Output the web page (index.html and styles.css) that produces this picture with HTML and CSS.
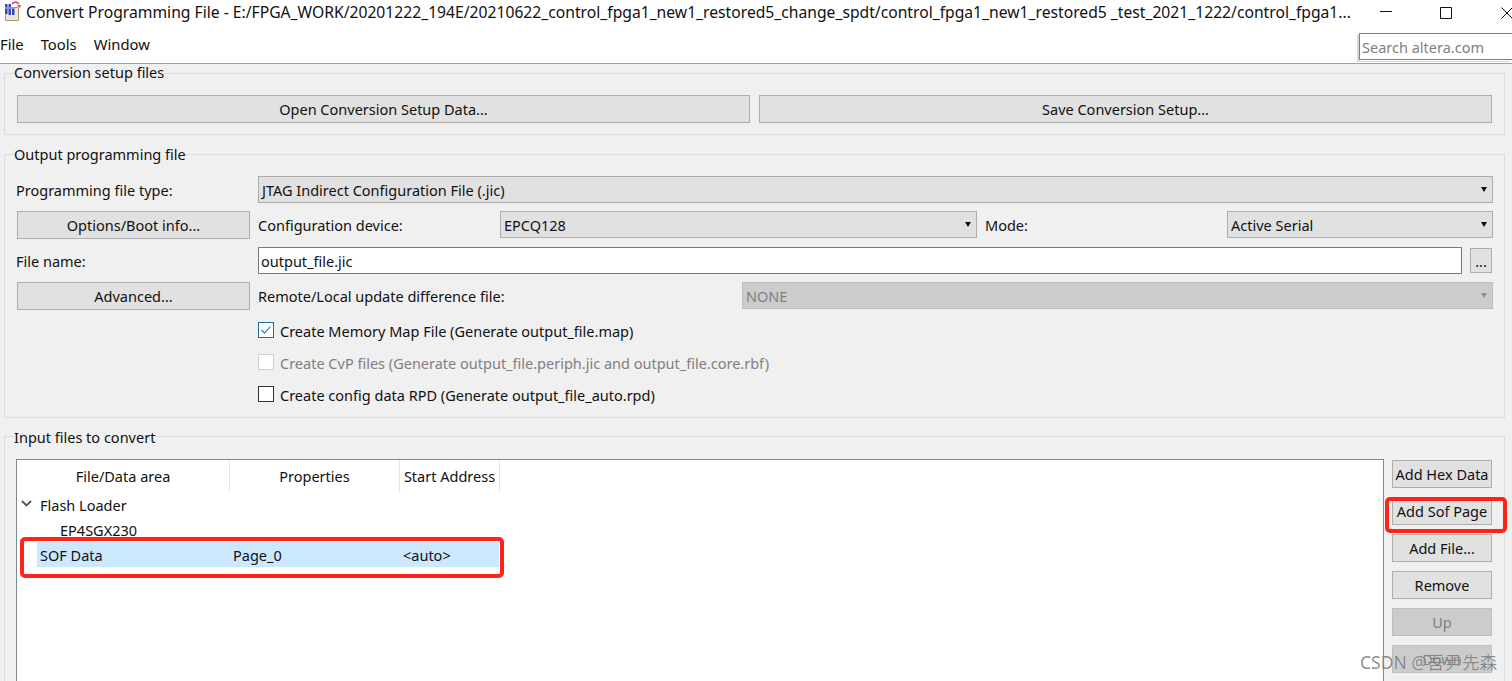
FILE: index.html
```html
<!DOCTYPE html>
<html lang="en">
<head>
<meta charset="utf-8">
<title>Convert Programming File</title>
<link rel="stylesheet" href="styles.css">
</head>
<body>
<div class="window">
  <header class="titlebar">
    <svg class="appicon" width="20" height="20" viewBox="0 0 20 20">
      <path d="M3.500 6.500h13v13h-13z" fill="#efe6d2" stroke="#a8987c"/>
      <path d="M3 3h2.500v10H3zM6.500 3H9v11H6.500zM10 6h2.500v8H10z" fill="#2f48b4"/>
      <path d="M3 6h10v2H3z" fill="#8a93c8"/>
      <path d="M10 3c2-2.500 5-2.500 7 0" fill="none" stroke="#e8486f" stroke-width="1.600"/>
      <path d="M15 4h4.500l-2 3z" fill="#e8486f"/>
    </svg>
    <div class="title">Convert Programming File - E:/FPGA_WORK/20201222_194E/20210622_control_fpga1_new1_restored5_change_spdt/control_fpga1_new1_restored5 _test_2021_1222/control_fpga1...</div>
    <div class="winctl">
      <svg class="minimize" width="12" height="12" viewBox="0 0 12 12"><path d="M0 4.500h12" stroke="#111" fill="none"/></svg>
      <svg class="maximize" width="12" height="12" viewBox="0 0 12 12"><path d="M.5.5h11v11H.5z" stroke="#111" fill="none"/></svg>
      <svg class="close" width="12" height="12" viewBox="0 0 12 12"><path d="M.5.5l11 11M11.500.5l-11 11" stroke="#111" fill="none"/></svg>
    </div>
  </header>
  <nav class="menubar">
    <span class="menu first">File</span>
    <span class="menu">Tools</span>
    <span class="menu">Window</span>
    <input class="search" placeholder="Search altera.com">
  </nav>
  <main class="content">
    <fieldset class="group setup">
      <legend>Conversion setup files</legend>
      <div class="setup-row">
        <button class="btn grow">Open Conversion Setup Data...</button>
        <button class="btn grow">Save Conversion Setup...</button>
      </div>
    </fieldset>

    <fieldset class="group output">
      <legend>Output programming file</legend>
      <div class="row r1">
        <label class="side-label">Programming file type:</label>
        <div class="combo fill">JTAG Indirect Configuration File (.jic)<i class="arrow"></i></div>
      </div>
      <div class="row r2">
        <button class="btn side">Options/Boot info...</button>
        <label class="cfg-label">Configuration device:</label>
        <div class="combo cfg">EPCQ128<i class="arrow"></i></div>
        <label class="mode-label">Mode:</label>
        <div class="combo mode">Active Serial<i class="arrow"></i></div>
      </div>
      <div class="row r3">
        <label class="side-label">File name:</label>
        <div class="textbox">output_file.jic</div>
        <button class="btn browse">...</button>
      </div>
      <div class="row r4">
        <button class="btn side">Advanced...</button>
        <label class="remote-label">Remote/Local update difference file:</label>
        <div class="combo disabled none">NONE<i class="arrow"></i></div>
      </div>
      <div class="checks">
        <div class="check">
          <span class="box on"><svg width="14" height="14" viewBox="0 0 14 14"><path d="M2.500 7l3 3.200 6-6.700" fill="none" stroke="#2a6fb0" stroke-width="1.100"/></svg></span>
          Create Memory Map File (Generate output_file.map)
        </div>
        <div class="check dim"><span class="box"></span>Create CvP files (Generate output_file.periph.jic and output_file.core.rbf)</div>
        <div class="check"><span class="box"></span>Create config data RPD (Generate output_file_auto.rpd)</div>
      </div>
    </fieldset>

    <fieldset class="group input">
      <legend>Input files to convert</legend>
      <div class="input-body">
        <div class="tree">
          <div class="thead">
            <span class="th c1">File/Data area</span>
            <span class="th c2">Properties</span>
            <span class="th c3">Start Address</span>
          </div>
          <div class="trow loader">
            <svg class="chev" width="11" height="8" viewBox="0 0 11 8"><path d="M1 1l4.500 4.500L10 1" fill="none" stroke="#555" stroke-width="1.800"/></svg>
            Flash Loader
          </div>
          <div class="trow device">EP4SGX230</div>
          <div class="trow selected">
            <span class="d1">SOF Data</span><span class="d2">Page_0</span><span class="d3">&lt;auto&gt;</span>
          </div>
        </div>
        <div class="actions">
          <button class="btn act">Add Hex Data</button>
          <button class="btn act">Add Sof Page</button>
          <button class="btn act">Add File...</button>
          <button class="btn act">Remove</button>
          <button class="btn act off">Up</button>
          <button class="btn act off">Down</button>
        </div>
      </div>
    </fieldset>
  </main>
  <div class="mark mark-row"></div>
  <div class="mark mark-btn"></div>
  <div class="watermark">CSDN @吾尹先森</div>
</div>
</body>
</html>
```

FILE: styles.css
```css
* { box-sizing: border-box; }
html, body { margin: 0; padding: 0; }
body {
  width: 1512px; height: 681px; overflow: hidden;
  font-family: "Noto Sans", "Noto Sans CJK SC", sans-serif;
  font-size: 14.5px; color: #111; background: #f0f0f0;
}
.window { position: relative; width: 1512px; height: 681px; overflow: hidden; }

.titlebar { height: 31px; background: #fff; display: flex; align-items: flex-start; }
.appicon { margin: 1px 0 0 2px; flex: none; }
.title { margin-left: 4px; padding-top: 2px; width: 1330px; white-space: nowrap; font-size: 15.68px; line-height: 20px; color: #111; flex: none; }
.winctl { display: flex; flex: none; }
.minimize { margin: 7px 0 0 24px; }
.maximize { margin: 7px 0 0 48px; }
.close { margin: 7px 0 0 49px; }

.menubar { height: 33px; background: #fff; border-bottom: 1px solid #a0a0a8; display: flex; align-items: flex-start; }
.menu { font-size: 14.8px; line-height: 20px; padding-top: 3px; margin-left: 17px; }
.menu.first { margin-left: 0; }
.search {
  margin: 2px 0 0 auto; width: 153px; height: 27px; border: 1px solid #7e7e7e; border-right: 0;
  padding: 0 2px; font: 14.5px "Noto Sans", sans-serif; background: #fff;
  box-shadow: 0 1px 0 #fff, -2px 2px 0 #d5d5d5;
}
.search::placeholder { color: #808080; opacity: 1; }

.content { padding: 0 7px 0 4px; }
.group { margin: 0; border: 1px solid #dcdcdc; min-width: 0; padding: 0 12px; }
.group legend { padding: 0 0 2px; margin-left: -3px; font-size: 14.5px; line-height: 16px; height: 18px; }
.output legend { position: relative; top: 1px; }
.input legend { position: relative; top: 2px; }
.setup { height: 71px; }
.setup-row { display: flex; gap: 9px; padding-top: 13px; }
.output { height: 273px; margin-top: 10px; }
.input { height: 300px; margin-top: 9px; }

.btn {
  height: 28px; background: #e1e1e1; border: 1px solid #adadad; padding: 0;
  font: 14.5px/20px "Noto Sans", sans-serif; color: #111; text-align: center;
}
.grow { flex: 1 1 0; }

.row { display: flex; align-items: flex-start; height: 28px; margin-bottom: 7px; }
.row label { line-height: 29px; }
.r1 { margin-top: 13px; }
.r2 { margin-bottom: 8px; }
.side-label { width: 241px; flex: none; margin-left: -1px; margin-right: 1px; }
.side { width: 233px; flex: none; margin-right: 8px; }
.combo {
  position: relative; height: 27px; background: #e1e1e1; border: 1px solid #adadad;
  padding: 0 3px; line-height: 27px; white-space: nowrap;
}
.fill { width: 1235px; flex: none; }
.arrow {
  position: absolute; right: 5px; top: 10px; width: 0; height: 0;
  border: 3.500px solid transparent; border-top: 5px solid #111; border-bottom: 0;
}
.cfg-label { width: 242px; flex: none; }
.cfg { width: 477px; flex: none; }
.mode-label { width: 242px; flex: none; margin-left: 8px; }
.mode { width: 266px; flex: none; }
.textbox {
  width: 1204px; flex: none; height: 27px; background: #fff; border: 1px solid #7a7a7a;
  padding: 0 2px; line-height: 27px;
}
.browse { width: 22px; height: 25px; margin: 1px 0 0 8px; flex: none; line-height: 16px; }
.remote-label { width: 484px; flex: none; }
.disabled { background: #cccccc; border-color: #bfbfbf; color: #808080; }
.disabled .arrow { border-top-color: #8f8f8f; }
.none { width: 751px; flex: none; }

.checks { margin: -2px 0 0 241px; }
.check { display: flex; align-items: center; height: 32px; gap: 6px; white-space: nowrap; }
.check.dim { color: #808080; }
.box { width: 16px; height: 16px; margin-bottom: 2px; border: 1px solid #333; background: #fff; display: flex; align-items: center; justify-content: center; flex: none; }
.box.on { border-color: #1e6aa8; }
.dim .box { border-color: #cfcfcf; }

.input-body { display: flex; padding-top: 14px; }
.tree { width: 1368px; height: 260px; margin-left: -1px; flex: none; background: #fff; border: 1px solid #828790; }
.thead { height: 32px; display: flex; }
.th { display: flex; align-items: center; justify-content: center; border-right: 1px solid #e5e5e5; flex: none; }
.c1 { width: 213px; }
.c2 { width: 170px; }
.c3 { width: 100px; }
.trow { height: 25px; display: flex; align-items: center; white-space: nowrap; }
.loader { padding-left: 4px; }
.chev { margin-right: 8px; margin-top: -1px; }
.device { padding-left: 43px; }
.selected { margin-left: 20px; width: 462px; background: #cce8ff; }
.selected span { display: block; flex: none; }
.d1 { width: 196px; padding-left: 3px; }
.d2 { width: 170px; }
.d3 { width: 96px; }

.actions { display: flex; flex-direction: column; gap: 9px; margin-left: 8px; padding-top: 1px; width: 100px; flex: none; }
.act { width: 100px; height: 28px; flex: none; }
.off { background: #cccccc; border-color: #bfbfbf; color: #808080; }

.mark { position: absolute; border: 4px solid #ff2418; border-radius: 5px; pointer-events: none; }
.mark-row { left: 20px; top: 537px; width: 484px; height: 41px; }
.mark-btn { left: 1385px; top: 497px; width: 122px; height: 36px; }
.watermark {
  position: absolute; left: 1360px; top: 650px; font-size: 17.500px; line-height: 24px;
  color: rgba(90, 90, 90, .7); white-space: nowrap; text-shadow: 0 0 1px rgba(255, 255, 255, .7);
}
```
